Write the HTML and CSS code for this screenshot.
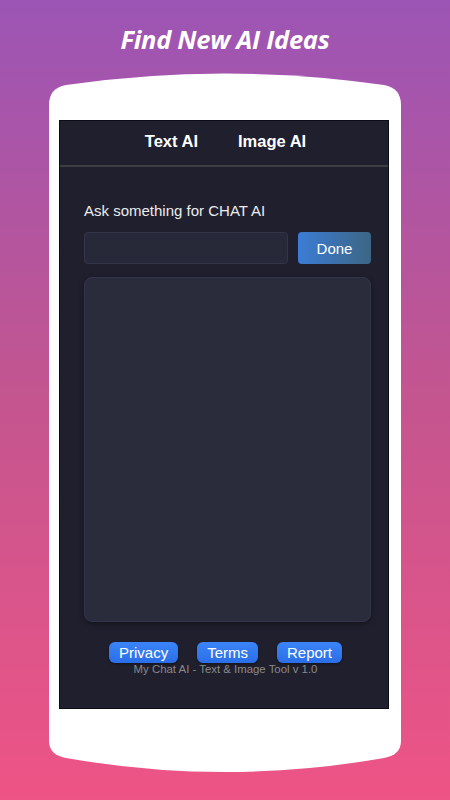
FILE: index.html
```html
<!DOCTYPE html>
<html>
<head>
<meta charset="utf-8">
<link rel="stylesheet" href="styles.css">
</head>
<body>
<div class="page">
  <h1 class="title">Find New AI Ideas</h1>
  <div class="phone">
    <svg class="phone-shape" width="352" height="720" viewBox="49 62 352 720">
      <path d="M49,105 Q49,88 66,85 Q225,62 384,85 Q401,88 401,105 L401,741 Q401,755 384,758 Q225,786 66,758 Q49,755 49,741 Z" fill="#fff"/>
    </svg>
    <div class="screen">
      <nav class="tabs">
        <span class="tab">Text AI</span>
        <span class="tab">Image AI</span>
      </nav>
      <main class="content">
        <label class="label">Ask something for CHAT AI</label>
        <div class="ask-row">
          <div class="input"></div>
          <button class="done">Done</button>
        </div>
        <div class="output"></div>
        <div class="links">
          <button class="link">Privacy</button>
          <button class="link">Terms</button>
          <button class="link">Report</button>
        </div>
        <p class="version">My Chat AI - Text &amp; Image Tool v 1.0</p>
      </main>
    </div>
  </div>
</div>
</body>
</html>
```
FILE: styles.css
```css
* { box-sizing: border-box; }
html, body { margin: 0; padding: 0; }
body {
  width: 450px;
  height: 800px;
  overflow: hidden;
  background: linear-gradient(180deg, #9c55b5 0%, #c4558f 50%, #ee5485 100%);
  font-family: "Liberation Sans", Arial, sans-serif;
}
.page {
  display: flex;
  flex-direction: column;
  align-items: center;
}
.title {
  margin: 0;
  padding-top: 21px;
  height: 62px;
  font-family: "Open Sans", sans-serif;
  font-style: italic;
  font-weight: 700;
  font-size: 25.5px;
  line-height: 36px;
  color: #fff;
  letter-spacing: -0.3px;
}
.phone {
  position: relative;
  width: 352px;
  height: 720px;
}
.phone-shape {
  position: absolute;
  left: 0;
  top: 0;
}
.screen {
  position: relative;
  margin: 58px 0 0 10px;
  width: 330px;
  height: 589px;
  background: #1f1f2e;
  border: 1px solid #0c0c14;
  display: flex;
  flex-direction: column;
}
.tabs {
  height: 46px;
  border-bottom: 2px solid #3c3e42;
  display: flex;
  justify-content: center;
  align-items: center;
  gap: 40px;
  padding-left: 3px;
  padding-bottom: 4px;
}
.tab {
  color: #fff;
  font-weight: 700;
  font-size: 16.5px;
}
.content {
  padding: 35px 17px 0 24px;
  display: flex;
  flex-direction: column;
}
.label {
  color: #ececec;
  font-size: 15px;
  line-height: 17px;
}
.ask-row {
  margin-top: 13px;
  display: flex;
  gap: 10px;
}
.input {
  width: 204px;
  height: 32px;
  background: #272838;
  border: 1px solid #34354a;
  border-radius: 4px;
}
.done {
  width: 73px;
  height: 32px;
  border: none;
  border-radius: 4px;
  background: linear-gradient(90deg, #3b7cd6, #3d6684);
  color: #fff;
  font-family: "Liberation Sans", Arial, sans-serif;
  font-size: 15px;
  padding: 0;
}
.output {
  margin-top: 13px;
  width: 287px;
  height: 345px;
  background: #2a2b3b;
  border: 1px solid #34354a;
  border-radius: 8px;
  box-shadow: 0 2px 6px rgba(0,0,0,0.35);
}
.links {
  margin-top: 20px;
  display: flex;
  justify-content: center;
  gap: 19px;
  padding-right: 4px;
}
.link {
  height: 21px;
  border: none;
  border-radius: 6px;
  background: linear-gradient(180deg, #3b84f8, #2a6ee8);
  color: #fff;
  font-family: "Liberation Sans", Arial, sans-serif;
  font-size: 15px;
  line-height: 21px;
  padding: 0 10px;
  box-shadow: 0 1px 3px rgba(0,0,0,0.4);
}
.version {
  margin: 0;
  text-align: center;
  color: #8a8a8a;
  font-size: 11.4px;
  line-height: 13px;
  padding-right: 4px;
}
```
